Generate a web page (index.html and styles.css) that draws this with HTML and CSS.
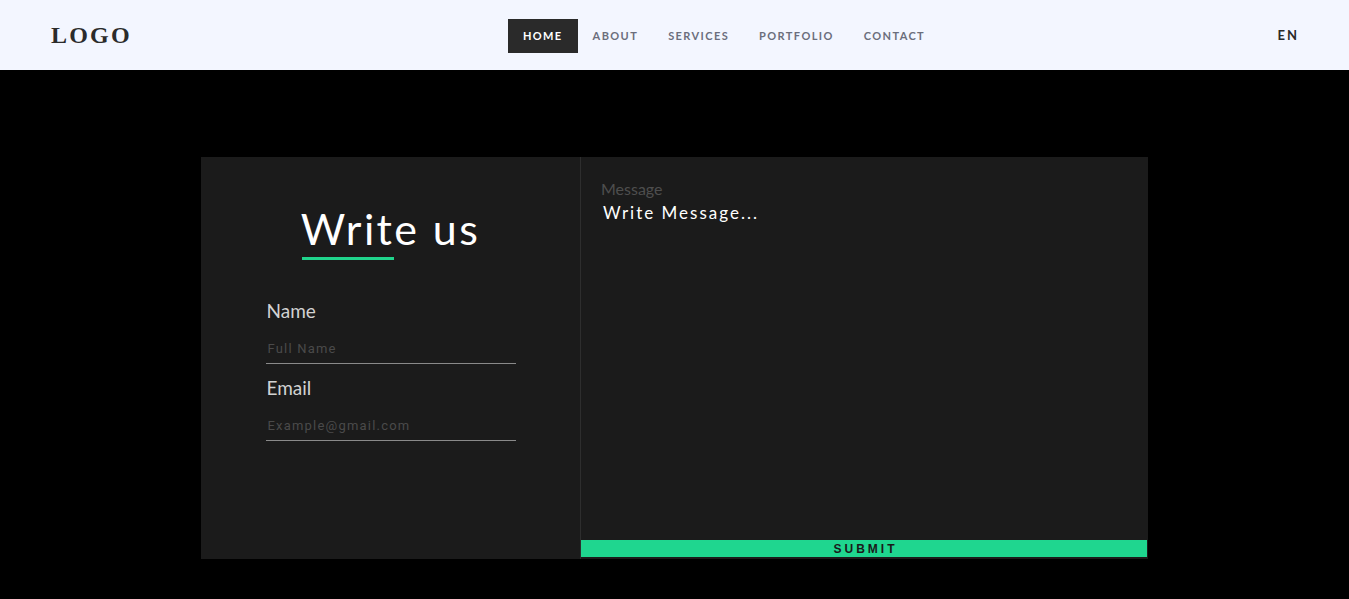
FILE: index.html
```html
<!DOCTYPE html>
<html lang="en">
<head>
<meta charset="utf-8">
<title>Write us</title>
<link rel="stylesheet" href="styles.css">
</head>
<body>
<header class="topbar">
  <div class="brand">LOGO</div>
  <nav class="menu">
    <a class="menu-item active" href="#">HOME</a>
    <a class="menu-item" href="#">ABOUT</a>
    <a class="menu-item" href="#">SERVICES</a>
    <a class="menu-item" href="#">PORTFOLIO</a>
    <a class="menu-item" href="#">CONTACT</a>
  </nav>
  <div class="lang"><span>EN</span></div>
</header>
<main class="stage">
  <form class="card">
    <section class="card-left">
      <h1 class="title">Write us</h1>
      <div class="field">
        <label class="field-label">Name</label>
        <input class="field-input" type="text" placeholder="Full Name">
      </div>
      <div class="field">
        <label class="field-label">Email</label>
        <input class="field-input" type="text" placeholder="Example@gmail.com">
      </div>
    </section>
    <section class="card-right">
      <label class="msg-label">Message</label>
      <textarea class="msg-input" placeholder="Write Message..."></textarea>
      <button class="submit" type="button">SUBMIT</button>
    </section>
  </form>
</main>
</body>
</html>
```

FILE: styles.css
```css
* { box-sizing: border-box; }
html, body { margin: 0; padding: 0; }
body {
  background: #000;
  font-family: Lato, "Open Sans", sans-serif;
  height: 599px;
  overflow: hidden;
}
.topbar {
  height: 70px;
  background: #f3f6ff;
  display: flex;
  align-items: center;
  padding: 0 50px 0 51px;
}
.brand {
  flex: 1;
  font-family: "Liberation Serif", serif;
  font-weight: bold;
  font-size: 24px;
  letter-spacing: 2.2px;
  color: #2b2b2b;
  padding-top: 1px;
}
.menu {
  display: flex;
  align-items: center;
  margin-left: 98px;
  margin-top: 2px;
}
.menu-item {
  display: block;
  height: 34px;
  line-height: 34px;
  padding: 0 15px 0 15px;
  font-size: 11px;
  font-weight: bold;
  letter-spacing: 1.4px;
  color: #6b6e7c;
  text-decoration: none;
}
.menu-item.active {
  background: #2a2a2a;
  color: #fff;
}
.lang {
  flex: 1;
  display: flex;
  justify-content: flex-end;
  font-size: 13px;
  font-weight: bold;
  letter-spacing: 2px;
  color: #2a2a2a;
}
.stage {
  padding-top: 87px;
  display: flex;
  justify-content: center;
}
.card {
  width: 947px;
  height: 402px;
  background: #1b1b1b;
  display: flex;
  margin: 0;
}
.card-left {
  width: 380px;
  border-right: 1px solid #2e2e2e;
  display: flex;
  flex-direction: column;
  align-items: center;
  padding-top: 44px;
}
.title {
  margin: 0;
  position: relative;
  font-weight: normal;
  font-size: 43px;
  line-height: 56px;
  letter-spacing: 2.4px;
  color: #fff;
  padding-bottom: 3px;
  margin-bottom: 39px;
}
.title::after {
  content: "";
  position: absolute;
  left: 1px;
  bottom: 0;
  width: 92px;
  height: 3px;
  background: #20d48c;
}
.field {
  width: 250px;
  display: flex;
  flex-direction: column;
  margin-bottom: 12px;
}
.field-label {
  font-size: 19px;
  color: #d2d2d2;
  line-height: 24px;
  padding-left: 1px;
}
.field-input {
  background: transparent;
  border: none;
  border-bottom: 1px solid #8a8a8a;
  height: 41px;
  padding: 10px 2px 0;
  font-family: Roboto, Arial, sans-serif;
  font-size: 13px;
  letter-spacing: 1.2px;
  color: #ccc;
  outline: none;
}
.field-input::placeholder { color: #4a4a4a; }
.card-right {
  flex: 1;
  display: flex;
  flex-direction: column;
  padding: 21px 1px 2px 0;
}
.msg-label {
  padding-left: 20px;
  font-size: 16px;
  line-height: 21px;
  color: #4e4e4e;
}
.msg-input {
  flex: 1;
  background: transparent;
  border: none;
  resize: none;
  outline: none;
  padding: 3px 22px 0;
  font-family: Lato, sans-serif;
  font-size: 17px;
  letter-spacing: 2px;
  color: #fff;
}
.msg-input::placeholder { color: #fff; }
.submit {
  height: 17px;
  border: none;
  background: #1fd68f;
  font-family: "Liberation Sans", Arial, sans-serif;
  font-weight: bold;
  font-size: 12px;
  letter-spacing: 3px;
  color: #1a1a1a;
  padding: 0 0 0 3px;
  line-height: 18px;
}
```
